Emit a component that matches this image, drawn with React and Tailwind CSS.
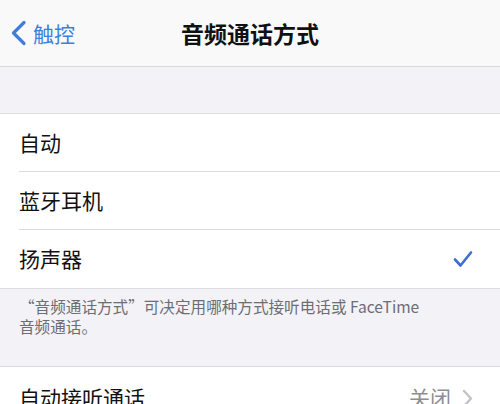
import React from "react";

const font = { fontFamily: '"Noto Sans CJK SC", "Noto Sans", sans-serif' };

function Row({ label, right, last }) {
  return (
    <div className="flex h-[58px] items-center pl-[19px]">
      <div className={`flex h-full flex-1 items-center pr-[27px] ${last ? "" : "border-b border-[#dcdce0]"}`}>
        <span className="flex-1 text-[21px] text-[#111]">{label}</span>
        {right}
      </div>
    </div>
  );
}

export default function App() {
  return (
    <div className="h-[404px] w-[500px] overflow-hidden bg-[#f2f2f7]" style={font}>
      {/* Nav bar */}
      <div className="relative flex h-[67px] items-center border-b border-[#d8d8dc] bg-[#f9f9f9]">
        <div className="flex items-center pl-[10px] text-[#3d7fd9]">
          <svg width="17" height="26" viewBox="0 0 17 26" fill="none">
            <path d="M14 2.5 L3.5 13 L14 23.5" stroke="#3d7fd9" strokeWidth="3.2" strokeLinecap="round" strokeLinejoin="round" />
          </svg>
          <span className="ml-[6px] text-[21px] leading-none">触控</span>
        </div>
        <div className="pointer-events-none absolute inset-x-0 top-0 flex h-full items-center justify-center">
          <span className="text-[23px] font-semibold leading-none text-[#111]">音频通话方式</span>
        </div>
      </div>

      <div className="h-[46px]" />

      {/* Options */}
      <div className="border-y border-[#dcdce0] bg-white">
        <Row label="自动" />
        <Row label="蓝牙耳机" />
        <Row
          label="扬声器"
          last
          right={
            <svg width="20" height="18" viewBox="0 0 20 18" fill="none">
              <path d="M2 9.5 L7.5 15.5 L18 2.5" stroke="#3d6fd0" strokeWidth="2.6" strokeLinecap="round" strokeLinejoin="round" />
            </svg>
          }
        />
      </div>

      {/* Footer */}
      <div className="h-[77px] px-[19px] pt-[7px] text-[15.6px] leading-[20px] text-[#6d6d72]">
        <p>“音频通话方式”可决定用哪种方式接听电话或 FaceTime</p>
        <p>音频通话。</p>
      </div>

      {/* Second section */}
      <div className="border-t border-[#dcdce0] bg-white">
        <div className="flex h-[58px] items-center pl-[19px] pr-[27px] pt-[4px]">
          <span className="flex-1 text-[21px] text-[#111]">自动接听通话</span>
          <span className="text-[21px] text-[#8e8e93]">关闭</span>
          <svg className="ml-[11px]" width="11" height="19" viewBox="0 0 11 19" fill="none">
            <path d="M2 2 L9 9.5 L2 17" stroke="#c4c4c8" strokeWidth="2.4" strokeLinecap="round" strokeLinejoin="round" />
          </svg>
        </div>
      </div>
    </div>
  );
}
